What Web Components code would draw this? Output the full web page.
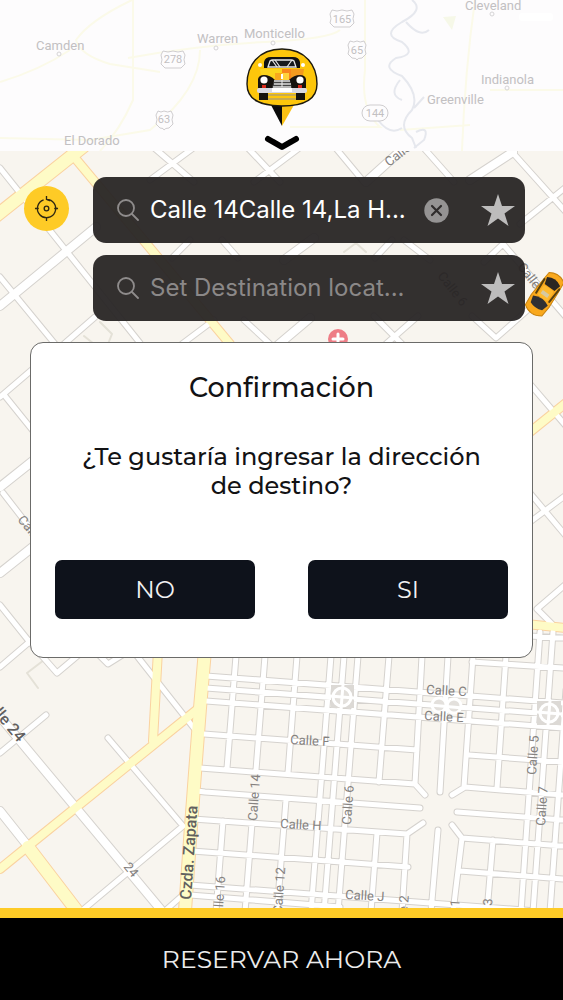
<!DOCTYPE html>
<html lang="es">
<head>
<meta charset="utf-8">
<meta name="viewport" content="width=device-width, initial-scale=1">
<title>Reservar taxi</title>
<style>
    body {
        margin: 0;
        background: #000;
        font-family: Inter, "Liberation Sans", sans-serif;
    }
</style>
</head>
<body>
<taxi-app>
    <brand-header slot="header"></brand-header>
    <search-panel>
        <search-field label="Origen" value="Calle 14Calle 14,La H..."></search-field>
        <search-field label="Destino" placeholder="Set Destination locat..."></search-field>
    </search-panel>
    <confirm-dialog>
        <span slot="title">Confirmación</span>
        <span slot="message">¿Te gustaría ingresar la dirección de destino?</span>
    </confirm-dialog>
    <book-button slot="footer">RESERVAR AHORA</book-button>
</taxi-app>

<script>
class TaxiApp extends HTMLElement {

    constructor() {
        super();
        this.attachShadow({mode: "open"});
    }

    connectedCallback() {
        this.shadowRoot.innerHTML = `
        <style>
            :host {
                display: flex;
                flex-direction: column;
                min-height: 100vh;
            }

            main {
                position: relative;
                flex: 1;
                overflow: hidden;
                padding-bottom: 24px;
            }

            .content {
                position: relative;
            }
        </style>
        <main>
            <city-map></city-map>
            <div class="content">
                <slot name="header"></slot>
                <slot></slot>
            </div>
        </main>
        <slot name="footer"></slot>`;
    }
}

class CityMap extends HTMLElement {

    constructor() {
        super();
        this.attachShadow({mode: "open"});
    }

    connectedCallback() {
        this.shadowRoot.innerHTML = `
        <style>
            :host {
                position: absolute;
                inset: 0;
                background: #f8f5ef;
            }

            svg {
                display: block;
                width: 100%;
                height: 100%;
            }

            path, use {
                fill: none;
                stroke-linecap: round;
                stroke-linejoin: round;
            }

            .edge {
                stroke: #d5d2ce;
            }

            .road {
                stroke: #fff;
            }

            .main-edge {
                stroke: #fad2a0;
            }

            .main-road {
                stroke: #fefbc6;
            }

            text {
                font-family: Roboto, sans-serif;
                font-size: 13px;
                fill: #85827f;
            }

            .big {
                font-size: 16px;
                font-weight: 500;
                fill: #62605e;
            }
        </style>
        <svg viewBox="0 0 563 908" preserveAspectRatio="xMidYMin slice" aria-hidden="true">
            <defs>
                <path id="thin" d="M0 168L140 343 M0 277L55 344 M5 396L34 432 M0 397L34 368 M3 493L34 533
                    M0 605L28 640L57 673L82 652 M0 667L34 638 M64 344L95 317
                    M152 146L194 182 M196 146L150 180 M246 146L280 182 M302 146L254 182
                    M334 146L364 182 M422 146L454 182 M513 153L566 212 M566 187L520 224
                    M172 258L190 240 M222 240L238 258 M375 258L392 240 M404 240L430 260
                    M484 262L503 244L566 317 M182 344L214 320 M244 320L270 344
                    M374 316L402 344 M386 344L418 316 M472 316L496 338L530 308
                    M0 753L46 715 M108 738L183 826L84 909 M137 656L197 732 M98 654L108 664L124 654
                    M167 909L184 894 M530 384L566 426 M530 493L566 536 M530 522L566 495
                    M566 584L537 609L552 624"/>
                <path id="wide" d="M0 306L96 227 M366 182L406 146 M470 180L513 152 M284 260L314 238 M278 345L310 318
                    M0 487L34 460 M0 573L34 546 M-4 712L162 911 M0 811L27 845"/>
                <path id="grid" d="M206 676L563 703 M206 688L563 715 M206 701L563 728
                    M204 734L417 750 M469 755L563 762 M200 768L415 784L425 795
                    M452 795L465 787L563 795 M197 791L205 792L420 808 M457 812L563 820
                    M193 819L407 834L423 823 M452 825L462 838L563 846
                    M192 851L408 867 M460 871L563 879 M190 885L563 913 M190 895L340 907
                    M472 662L563 668 M530 636L563 638
                    M236 656L227 768 M223 821L216 912 M265 656L256 770 M252 823L245 912
                    M297 656L288 773 M286 800L277 912 M331 656L311 912 M344 656L324 912
                    M358 656L338 912 M389 656L379 782 M377 833L371 912 M422 656L415 784
                    M407 834L402 912 M448 656L440 792 M438 830L431 912 M473 656L464 787
                    M462 838L453 912 M506 656L497 788 M493 840L487 912 M540 632L521 912
                    M553 632L533 912 M566 690L550 912"/>
                <path id="avenue" d="M75 158L230 344 M158 650L153 741 M530 432L566 403 M526 624L566 628
                    M0 869L27 847L199 708"/>
                <path id="boulevard" d="M-4 216L84 146 M28 847L77 911 M205 650L200 708L195 773L190 840L185 911"/>
            </defs>

            <!-- park paths -->
            <path d="M38 688L27 673L44 660 M84 336L94 344 M100 322L112 334L108 344 M344 252L356 243L366 252" stroke="#e4e1d7" stroke-width="2"/>

            <use href="#wide" class="edge" stroke-width="10"/>
            <use href="#thin" class="edge" stroke-width="7"/>
            <use href="#grid" class="edge" stroke-width="7"/>
            <use href="#avenue" class="main-edge" stroke-width="10"/>
            <use href="#boulevard" class="main-edge" stroke-width="14"/>
            <use href="#wide" class="road" stroke-width="8"/>
            <use href="#thin" class="road" stroke-width="5"/>
            <use href="#grid" class="road" stroke-width="5"/>
            <use href="#avenue" class="main-road" stroke-width="8"/>
            <use href="#boulevard" class="main-road" stroke-width="12"/>

            <!-- roundabouts -->
            <g fill="#e3e0dc" stroke="#fff" stroke-width="3">
                <rect x="331" y="685" width="23" height="23" fill="#dcd9d5" stroke="none"/>
                <rect x="537" y="701" width="24" height="24" fill="#dcd9d5" stroke="none"/>
                <circle cx="342" cy="697" r="9"/>
                <circle cx="549" cy="713" r="9"/>
                <circle cx="439" cy="705" r="7"/>
                <circle cx="454" cy="706" r="7"/>
                <path d="M330 696L354 698 M343 685L341 709 M537 712L561 714 M550 701L548 725 M430 705L463 708 M447 698V712"/>
            </g>

            <text transform="translate(389 167) rotate(-38)">Calle</text>
            <text transform="translate(437 276) rotate(52)">Calle 6</text>
            <text transform="translate(517 267) rotate(52)">Calle 5</text>
            <text transform="translate(17 520) rotate(50)">Calle</text>
            <text class="big" transform="translate(18 743) rotate(50)" text-anchor="end">Calle 24</text>
            <text transform="translate(123 867) rotate(50)">24</text>
            <text class="big" transform="translate(191 900) rotate(-86)">Czda. Zapata</text>
            <text transform="translate(426 694) rotate(3)">Calle C</text>
            <text transform="translate(424 720) rotate(3)">Calle E</text>
            <text transform="translate(290 744) rotate(3)">Calle F</text>
            <text transform="translate(280 828) rotate(3)">Calle H</text>
            <text transform="translate(345 899) rotate(3)">Calle J</text>
            <text transform="translate(257 821) rotate(-86)">Calle 14</text>
            <text transform="translate(351 825) rotate(-86)">Calle 6</text>
            <text transform="translate(536 775) rotate(-86)">Calle 5</text>
            <text transform="translate(545 826) rotate(-86)">Calle 7</text>
            <text transform="translate(222 923) rotate(-86)">Calle 16</text>
            <text transform="translate(282 914) rotate(-86)">Calle 12</text>
            <text transform="translate(406 935) rotate(-86)">Calle 2</text>
            <text transform="translate(457 939) rotate(-86)">Calle 1</text>
            <text transform="translate(492 906) rotate(-86)">3</text>

            <!-- hospital -->
            <circle cx="338" cy="339" r="10" fill="#ee7d86"/>
            <path d="M333 339H343 M338 334V344" stroke="#fff" stroke-width="3"/>

            <!-- taxi, pointing north before the rotation -->
            <g transform="translate(545 294) rotate(35)">
                <path d="M-9 -20Q0 -26 9 -20L10 -8L11 8L10 20Q0 27 -10 20L-11 8L-10 -8Z" style="fill: #f9a81c" stroke="#c9830f"/>
                <path d="M-8 -15Q0 -20 8 -15L6 -8H-6Z" style="fill: #2a2622"/>
                <path d="M-9 8Q0 3 9 8L7 15Q0 18 -7 15Z" style="fill: #2f3033"/>
                <path d="M-9 -12L-8 4 M9 -12L8 4" stroke="#57400f" stroke-width="2"/>
                <rect x="-6" y="-7" width="12" height="12" rx="2" fill="#fdb92e"/>
                <rect x="-4" y="-2" width="8" height="4" fill="#d6c9a0"/>
            </g>
        </svg>`;
    }
}

class BrandHeader extends HTMLElement {

    constructor() {
        super();
        this.attachShadow({mode: "open"});
    }

    connectedCallback() {
        this.shadowRoot.innerHTML = `
        <style>
            :host {
                display: block;
            }

            header {
                position: relative;
                overflow: hidden;
                display: flex;
                flex-direction: column;
                align-items: center;
                gap: 8px;
                padding-top: 48px;
                background: #fdfcfd;
            }

            .region {
                position: absolute;
                inset: 0;
                width: 100%;
                height: 100%;
            }

            .region text {
                font: 400 13px Roboto, sans-serif;
                fill: #c2c0c2;
            }

            .region .shield text {
                font-size: 11px;
                text-anchor: middle;
            }

            .logo, button {
                position: relative;
            }

            .logo {
                display: block;
            }

            button {
                display: block;
                padding: 0;
                border: 0;
                background: none;
                cursor: pointer;
            }

            button svg {
                display: block;
            }
        </style>
        <header>
            <svg class="region" viewBox="0 0 563 151" preserveAspectRatio="xMidYMin slice" aria-hidden="true">
                <g fill="none" stroke="#fbfae9" stroke-width="2">
                    <path d="M132 0Q90 20 76 40Q80 55 110 64L160 72 M133 0V100Q120 130 100 151 M0 82Q40 70 70 50"/>
                    <path d="M128 58Q200 45 265 42T340 30 M200 50Q200 90 150 130L90 140L0 138 M365 0V70Q360 110 380 127H290"/>
                    <path d="M475 0Q465 70 462 151 M563 90H490 M400 130L470 125"/>
                </g>
                <g fill="none" stroke="#e6e8ee" stroke-width="2">
                    <path d="M412 0Q425 10 402 22Q380 35 402 42Q418 55 396 58Q380 68 402 76Q420 95 412 110Q396 126 412 138L416 148"/>
                    <path d="M406 22Q420 38 429 30 M400 80Q388 95 402 100 M378 120Q390 136 402 128 M414 108L424 97 M416 132Q430 125 424 140L414 148"/>
                </g>
                <path d="M443 17L456 16L452 30Z" fill="#f6f8e8"/>
                <rect x="519" y="13" width="34" height="8" rx="3" fill="#fff"/>
                <g fill="#fdfcfd" stroke="#d6d4d6">
                    <circle cx="59" cy="54" r="2"/>
                    <circle cx="216" cy="48" r="2"/>
                    <circle cx="273" cy="43" r="2"/>
                    <circle cx="492" cy="14" r="2"/>
                    <circle cx="507" cy="88" r="2"/>
                </g>
                <text x="36" y="50">Camden</text>
                <text x="197" y="43">Warren</text>
                <text x="244" y="38">Monticello</text>
                <text x="465" y="10">Cleveland</text>
                <text x="481" y="84">Indianola</text>
                <text x="427" y="104">Greenville</text>
                <text x="64" y="145">El Dorado</text>
                <g class="shield" fill="#fdfcfd" stroke="#cfcdcf">
                    <path d="M332 10Q337 12 342 10Q347 12 352 10L354 14Q352 19 354 23L350 27H334L330 23Q332 19 330 14Z"/>
                    <path d="M350 41Q354 43 357 41Q360 43 364 41L366 45Q364 50 366 54L362 58Q357 58 357 60Q357 58 352 58L348 54Q350 50 348 45Z"/>
                    <path d="M163 51Q168 53 173 51Q178 53 183 51L185 55Q183 60 185 64L181 68H165L161 64Q163 60 161 55Z"/>
                    <path d="M158 111Q161 113 164 111Q168 113 171 111L173 115Q171 120 173 124L169 128Q165 128 164 130Q164 128 160 128L156 124Q158 120 156 115Z"/>
                    <rect x="362" y="105" width="26" height="16" rx="8"/>
                    <g stroke="none">
                        <text x="342" y="23">165</text>
                        <text x="357" y="54">65</text>
                        <text x="173" y="63">278</text>
                        <text x="164" y="123">63</text>
                        <text x="375" y="117">144</text>
                    </g>
                </g>
            </svg>

            <svg class="logo" width="72" height="79" viewBox="0 0 72 79" role="img" aria-label="Taxi">
                <path d="M25 57H36V78Z" fill="#0a0a0a"/>
                <path d="M36 57H48L36 78Z" fill="#fbc114"/>
                <path d="M36 1C60 1 71 18 71 36C71 52 58 58 36 58C14 58 1 52 1 36C1 18 12 1 36 1Z" fill="#fdc60b" stroke="#1c1a10" stroke-width="1.4"/>
                <path d="M18 20V14Q19 9 25 9H47Q53 9 54 14V20Z" fill="#111"/>
                <path d="M22 19L24 13Q25 12 27 12H45Q47 12 48 13L50 19Z" fill="#16191d" stroke="#e8e8e8" stroke-width="1.3"/>
                <path d="M26 12L31 19 M29 12L34 19 M46 12L41 19" stroke="#e8e8e8" stroke-width="1.2"/>
                <path d="M14 21H36V34H16Z" fill="#fbd41c"/>
                <path d="M36 21H58L56 34H36Z" fill="#f39a1f"/>
                <path d="M29 25H36V34H29Z" fill="#f7a81c"/>
                <path d="M36 21H45V34H36Z" fill="#f8861b"/>
                <path d="M36 25H43V34H36Z" fill="#ffd23a"/>
                <path d="M12 40V31Q13 27 18 27Q24 27 29 32V40Z" fill="#17130f"/>
                <path d="M60 40V31Q59 27 54 27Q48 27 43 32V40Z" fill="#17130f"/>
                <path d="M28 32H44L46 40H26Z" fill="#444"/>
                <path d="M28 33H44 M28 36H45 M27 39H45" stroke="#ddd" stroke-width="1.4"/>
                <path d="M36 26V31" stroke="#fff" stroke-width="2"/>
                <path d="M36 32V39" stroke="#eee" stroke-width="1"/>
                <circle cx="18" cy="32" r="3.600" fill="#fff"/>
                <circle cx="54" cy="32" r="3.600" fill="#fff"/>
                <rect x="16" y="37" width="4" height="3" fill="#d92a1c"/>
                <rect x="52" y="37" width="4" height="3" fill="#d92a1c"/>
                <circle cx="14" cy="17" r="2" fill="#fff"/>
                <circle cx="57" cy="17" r="2" fill="#fff"/>
                <rect x="13" y="45" width="9" height="7" fill="#15120e"/>
                <rect x="50" y="45" width="9" height="7" fill="#15120e"/>
                <rect x="11" y="40" width="50" height="5" rx="2" fill="#d9d9e2"/>
                <rect x="26" y="40" width="20" height="4" fill="#fff"/>
                <path d="M22 47H50 M22 51H50" stroke="#b5a369" stroke-width="1.6"/>
            </svg>
            <button aria-label="Mostrar menú">
                <svg width="36" height="16" viewBox="0 0 36 16">
                    <path d="M4 4L18 12L32 4" fill="none" stroke="#000" stroke-width="6" stroke-linecap="round" stroke-linejoin="round"/>
                </svg>
            </button>
        </header>`;
    }
}

class SearchPanel extends HTMLElement {

    constructor() {
        super();
        this.attachShadow({mode: "open"});
    }

    connectedCallback() {
        this.shadowRoot.innerHTML = `
        <style>
            :host {
                display: grid;
                grid-template-columns: 45px minmax(0, 1fr);
                column-gap: 24px;
                padding: 26px 38px 0 24px;
            }

            button {
                width: 45px;
                height: 45px;
                margin-top: 9px;
                padding: 0;
                border: 0;
                border-radius: 50%;
                background: #fecb26;
                cursor: pointer;
            }

            svg {
                display: block;
                margin: auto;
            }

            .fields {
                display: flex;
                flex-direction: column;
                gap: 12px;
            }
        </style>
        <button aria-label="Mi ubicación">
            <svg width="25" height="25" viewBox="0 0 26 26" fill="none" stroke="#2f2813" stroke-width="1.4">
                <path d="M10 4A9.500 9.500 0 1 0 13 3.500L13 0"/>
                <path d="M13 3.500L17 5"/>
                <circle cx="13" cy="13" r="2.4"/>
                <path d="M13 22V26 M1 13H5 M21 13H25"/>
            </svg>
        </button>
        <div class="fields"><slot></slot></div>`;
    }
}

class SearchField extends HTMLElement {

    constructor() {
        super();
        this.attachShadow({mode: "open"});
    }

    connectedCallback() {
        const label = this.getAttribute("label");
        const value = this.getAttribute("value") || "";
        const placeholder = this.getAttribute("placeholder") || "";

        this.shadowRoot.innerHTML = `
        <style>
            :host {
                display: flex;
                align-items: center;
                height: 66px;
                padding: 0 9px 0 24px;
                box-sizing: border-box;
                border-radius: 13px;
                background: rgba(38, 35, 35, .94);
            }

            svg {
                display: block;
            }

            input {
                flex: 1;
                width: 0;
                min-width: 0;
                margin: 0 11px;
                padding: 0;
                border: 0;
                outline: 0;
                background: none;
                color: #fff;
                font: 24px/32px Inter, sans-serif;
            }

            input::placeholder {
                color: #8b8888;
                opacity: 1;
            }

            button {
                flex: none;
                padding: 0;
                border: 0;
                background: none;
                cursor: pointer;
            }

            .clear {
                margin-right: 31px;
            }
        </style>
        <label for="place" aria-label="${label}">
            <svg width="22" height="22" viewBox="0 0 22 22" fill="none" stroke="#8f8c8c" stroke-width="1.8" stroke-linecap="round">
                <circle cx="9" cy="9" r="8"/>
                <path d="M15 15L21 21"/>
            </svg>
        </label>
        <input id="place" type="text" aria-label="${label}" value="${value}" placeholder="${placeholder}">
        ${value ? `<button class="clear" aria-label="Borrar">
            <svg width="25" height="25" viewBox="0 0 25 25">
                <circle cx="12.5" cy="12.5" r="12.2" fill="#959393"/>
                <path d="M8 8L17 17 M17 8L8 17" stroke="#2f2c2c" stroke-width="2.2" stroke-linecap="round"/>
            </svg>
        </button>` : ""}
        <button aria-label="Favoritos">
            <svg width="36" height="36" viewBox="0 0 36 36">
                <path d="M18 2L22 14H35L24.500 21.500L28.500 34L18 26.500L7.500 34L11.500 21.500L1 14H14Z" fill="#bdbcbc"/>
            </svg>
        </button>`;
    }
}

class ConfirmDialog extends HTMLElement {

    constructor() {
        super();
        this.attachShadow({mode: "open"});
    }

    connectedCallback() {
        this.shadowRoot.innerHTML = `
        <style>
            * {
                margin: 0;
                box-sizing: border-box;
            }

            :host {
                display: block;
                margin: 21px 30px 0 30px;
            }

            section {
                padding: 27px 24px 38px;
                border: 1px solid #6b6b69;
                border-radius: 13px;
                background: #fff;
                color: #121214;
                text-align: center;
            }

            h2 {
                font: 500 27px/36px Montserrat, Inter, sans-serif;
            }

            p {
                margin: 36px 24px 60px;
                font: 500 24px/29px Montserrat, Inter, sans-serif;
            }

            .actions {
                display: grid;
                grid-template-columns: 1fr 1fr;
                gap: 53px;
            }

            button {
                height: 59px;
                border: 0;
                border-radius: 7px;
                background: #0e121b;
                color: #f1f1f2;
                font: 400 24px/30px Montserrat, Inter, sans-serif;
                cursor: pointer;
            }
        </style>
        <section role="dialog" aria-labelledby="title">
            <h2 id="title"><slot name="title"></slot></h2>
            <p><slot name="message"></slot></p>
            <div class="actions">
                <button>NO</button>
                <button>SI</button>
            </div>
        </section>`;
    }
}

class BookButton extends HTMLElement {

    constructor() {
        super();
        this.attachShadow({mode: "open"});
    }

    connectedCallback() {
        this.shadowRoot.innerHTML = `
        <style>
            :host {
                display: block;
            }

            button {
                display: block;
                width: 100%;
                padding: 24px;
                border: 0;
                border-top: 10px solid #fecb26;
                background: #000;
                color: #ececec;
                font: 400 25px/34px Montserrat, Inter, sans-serif;
                cursor: pointer;
            }
        </style>
        <button><slot></slot></button>`;
    }
}

customElements.define("taxi-app", TaxiApp);
customElements.define("city-map", CityMap);
customElements.define("brand-header", BrandHeader);
customElements.define("search-panel", SearchPanel);
customElements.define("search-field", SearchField);
customElements.define("confirm-dialog", ConfirmDialog);
customElements.define("book-button", BookButton);
</script>
</body>
</html>
